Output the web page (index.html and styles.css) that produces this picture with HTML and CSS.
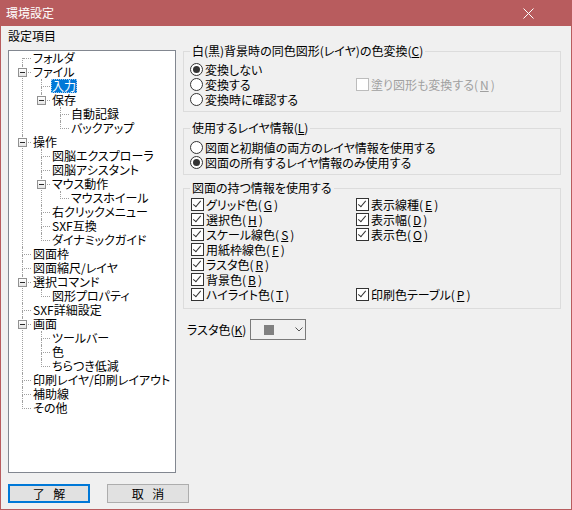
FILE: index.html
```html
<!DOCTYPE html>
<html lang="ja">
<head>
    <meta charset="UTF-8">
    <title>環境設定</title>
    <link rel="stylesheet" href="styles.css">
</head>
<body>
<div class="window">
    <div class="titlebar">
        <span class="title">環境設定</span>
        <svg class="close" width="11" height="11" viewBox="0 0 11 11">
            <path d="M0.5 0.5L10.5 10.5M10.5 0.5L0.5 10.5" stroke="#fff" stroke-width="1" fill="none"/>
        </svg>
    </div>

    <div class="body">
        <div class="side">
            <div class="side-label">設定項目</div>
            <div class="treebox">
                <ul class="tree">
                    <li><span class="label">フォルダ</span></li>
                    <li><span class="exp"></span><span class="label">ファイル</span>
                        <ul>
                            <li><span class="label sel">入力</span></li>
                            <li><span class="exp"></span><span class="label">保存</span>
                                <ul>
                                    <li><span class="label">自動記録</span></li>
                                    <li><span class="label">バックアップ</span></li>
                                </ul>
                            </li>
                        </ul>
                    </li>
                    <li><span class="exp"></span><span class="label">操作</span>
                        <ul>
                            <li><span class="label">図脳エクスプローラ</span></li>
                            <li><span class="label">図脳アシスタント</span></li>
                            <li><span class="exp"></span><span class="label">マウス動作</span>
                                <ul>
                                    <li><span class="label">マウスホイール</span></li>
                                </ul>
                            </li>
                            <li><span class="label">右クリックメニュー</span></li>
                            <li><span class="label">SXF互換</span></li>
                            <li><span class="label">ダイナミックガイド</span></li>
                        </ul>
                    </li>
                    <li><span class="label">図面枠</span></li>
                    <li><span class="label">図面縮尺/レイヤ</span></li>
                    <li><span class="exp"></span><span class="label">選択コマンド</span>
                        <ul>
                            <li><span class="label">図形プロパティ</span></li>
                        </ul>
                    </li>
                    <li><span class="label">SXF詳細設定</span></li>
                    <li><span class="exp"></span><span class="label">画面</span>
                        <ul>
                            <li><span class="label">ツールバー</span></li>
                            <li><span class="label">色</span></li>
                            <li><span class="label">ちらつき低減</span></li>
                        </ul>
                    </li>
                    <li><span class="label">印刷レイヤ/印刷レイアウト</span></li>
                    <li><span class="label">補助線</span></li>
                    <li><span class="label">その他</span></li>
                </ul>
            </div>
        </div>

        <div class="panel">
            <fieldset class="group g-convert">
                <legend>白(黒)背景時の同色図形(レイヤ)の色変換(<u>C</u>)</legend>
                <div class="rows">
                    <div class="opt"><span class="radio on"></span>変換しない</div>
                    <div></div>
                    <div class="opt"><span class="radio"></span>変換する</div>
                    <div class="opt disabled"><span class="check off"></span>塗り図形も変換する(<u>N</u>)</div>
                    <div class="opt"><span class="radio"></span>変換時に確認する</div>
                    <div></div>
                </div>
            </fieldset>

            <fieldset class="group g-layer">
                <legend>使用するレイヤ情報(<u>L</u>)</legend>
                <div class="rows single">
                    <div class="opt"><span class="radio"></span>図面と初期値の両方のレイヤ情報を使用する</div>
                    <div class="opt"><span class="radio on"></span>図面の所有するレイヤ情報のみ使用する</div>
                </div>
            </fieldset>

            <fieldset class="group g-info">
                <legend>図面の持つ情報を使用する</legend>
                <div class="rows">
                    <div class="opt"><span class="check"></span>グリッド色(<u>G</u>)</div>
                    <div class="opt"><span class="check"></span>表示線種(<u>E</u>)</div>
                    <div class="opt"><span class="check"></span>選択色(<u>H</u>)</div>
                    <div class="opt"><span class="check"></span>表示幅(<u>D</u>)</div>
                    <div class="opt"><span class="check"></span>スケール線色(<u>S</u>)</div>
                    <div class="opt"><span class="check"></span>表示色(<u>O</u>)</div>
                    <div class="opt"><span class="check"></span>用紙枠線色(<u>F</u>)</div>
                    <div></div>
                    <div class="opt"><span class="check"></span>ラスタ色(<u>R</u>)</div>
                    <div></div>
                    <div class="opt"><span class="check"></span>背景色(<u>B</u>)</div>
                    <div></div>
                    <div class="opt"><span class="check"></span>ハイライト色(<u>T</u>)</div>
                    <div class="opt"><span class="check"></span>印刷色テーブル(<u>P</u>)</div>
                </div>
            </fieldset>

            <div class="raster">
                <span class="raster-label">ラスタ色(<u>K</u>)</span>
                <div class="combo">
                    <span class="swatch"></span>
                    <svg class="arrow" width="8" height="5" viewBox="0 0 8 5">
                        <polyline points="0.5,0.5 4,4 7.5,0.5" fill="none" stroke="#555" stroke-width="1"/>
                    </svg>
                </div>
            </div>
        </div>
    </div>

    <div class="buttons">
        <button class="btn default">了 解</button>
        <button class="btn">取 消</button>
    </div>
</div>
</body>
</html>
```

FILE: styles.css
```css
body {
    margin: 0;
    padding: 0;
    font-family: "Noto Sans CJK JP", "Noto Sans", sans-serif;
    font-size: 12px;
    font-feature-settings: "palt";
    color: #000;
    background-color: #f0f0f0;
}

.window {
    width: 572px;
    height: 510px;
    box-sizing: border-box;
    border: 1px solid #b85c5e;
    border-top: none;
    background-color: #f0f0f0;
}

/* title bar */
.titlebar {
    height: 26px;
    background-color: #b85c5e;
    color: #fff;
    display: flex;
    align-items: center;
    justify-content: space-between;
    padding: 0 37px 0 5px;
}
.title {
    line-height: 14px;
}

.body {
    display: flex;
    height: 447px;
}

/* left: settings tree */
.side {
    width: 168px;
    margin-left: 7px;
    padding-top: 3px;
}
.side-label {
    line-height: 14px;
}
.treebox {
    margin-top: 7px;
    height: 423px;
    box-sizing: border-box;
    border: 1px solid #828790;
    background-color: #fff;
}

.tree,
.tree ul {
    list-style: none;
    margin: 0;
    padding: 0;
}
.tree {
    padding-left: 13px;
}
.tree ul {
    margin-left: 9px;
}
.tree li {
    position: relative;
    padding-left: 10px;
    line-height: 14px;
}
.tree li::before {
    content: "";
    position: absolute;
    left: 0;
    top: 0;
    width: 8px;
    height: 7px;
    border-left: 1px dotted #a0a0a0;
    border-bottom: 1px dotted #a0a0a0;
}
.tree li::after {
    content: "";
    position: absolute;
    left: 0;
    top: 8px;
    bottom: 0;
    border-left: 1px dotted #a0a0a0;
}
.tree li:last-child::after {
    display: none;
}
.tree > li:first-child::before {
    border-left: none;
    left: 1px;
}
.tree > li:first-child::after {
    top: 7px;
}
.tree .label {
    display: inline-block;
    height: 14px;
    padding: 0 1px;
    white-space: nowrap;
    vertical-align: top;
}
.tree .label.sel {
    background-color: #0078d7;
    color: #fff;
    outline: 1px dotted #9cc8f0;
    outline-offset: -1px;
}
.tree .exp {
    position: absolute;
    z-index: 1;
    left: -4px;
    top: 3px;
    width: 9px;
    height: 9px;
    box-sizing: border-box;
    border: 1px solid #919191;
    background: linear-gradient(#fff, #e4e4e4);
}
.tree .exp::after {
    content: "";
    position: absolute;
    left: 1px;
    top: 3px;
    width: 5px;
    height: 1px;
    background-color: #2b2b2b;
}

/* right: option groups */
.panel {
    width: 378px;
    margin-left: 7px;
    padding-top: 18px;
}
.group {
    margin: 0;
    padding: 0 0 4px 6px;
    border: 1px solid #dcdcdc;
    min-width: 0;
}
.group legend {
    padding: 0 2px;
    line-height: 14px;
}
.g-convert .rows {
    padding-top: 4px;
}
.g-layer {
    margin-top: 9px;
}
.g-layer .rows {
    padding-top: 5px;
}
.g-info {
    margin-top: 6px;
    padding-bottom: 6px;
}
.g-info .rows {
    padding-top: 2px;
}

.rows {
    display: grid;
    grid-template-columns: 165px 1fr;
    grid-auto-rows: 15px;
}
.rows.single {
    grid-template-columns: 1fr;
}
.opt {
    display: flex;
    align-items: center;
    gap: 2px;
    line-height: 15px;
    white-space: nowrap;
}
.opt.disabled {
    color: #a0a0a0;
}

.radio {
    position: relative;
    width: 13px;
    height: 13px;
    box-sizing: border-box;
    border: 1px solid #333;
    border-radius: 50%;
    background-color: #fff;
}
.radio.on::after {
    content: "";
    position: absolute;
    left: 2px;
    top: 2px;
    width: 7px;
    height: 7px;
    border-radius: 50%;
    background-color: #333;
}

.check {
    position: relative;
    width: 13px;
    height: 13px;
    margin-left: 1px;
    box-sizing: border-box;
    border: 1px solid #333;
    background-color: #fff;
}
.check::after {
    content: "";
    position: absolute;
    left: 3px;
    top: 0px;
    width: 3px;
    height: 7px;
    border-right: 1px solid #333;
    border-bottom: 1px solid #333;
    transform: rotate(40deg);
}
.check.off {
    border-color: #bcbcbc;
    background-color: #fff;
}
.check.off::after {
    display: none;
}

/* raster colour picker */
.raster {
    display: flex;
    align-items: center;
    margin-top: 10px;
    padding-left: 4px;
}
.raster-label {
    width: 63px;
    line-height: 14px;
    white-space: nowrap;
}
.combo {
    width: 56px;
    height: 21px;
    box-sizing: border-box;
    border: 1px solid #7a7a7a;
    background-color: #f0f0f0;
    display: flex;
    align-items: center;
    padding-left: 13px;
}
.swatch {
    width: 10px;
    height: 10px;
    background-color: #808080;
}
.arrow {
    margin-left: 21px;
}

/* dialog buttons */
.buttons {
    display: flex;
    gap: 17px;
    margin-top: 11px;
    padding-left: 7px;
}
.btn {
    width: 82px;
    height: 19px;
    box-sizing: border-box;
    padding: 0;
    border: 1px solid #adadad;
    background-color: #e1e1e1;
    font-family: "Noto Sans CJK JP", "Noto Sans", sans-serif;
    font-size: 12px;
    line-height: 14px;
    word-spacing: 6px;
    color: #000;
}
.btn.default {
    border: 2px solid #0078d7;
}
```
